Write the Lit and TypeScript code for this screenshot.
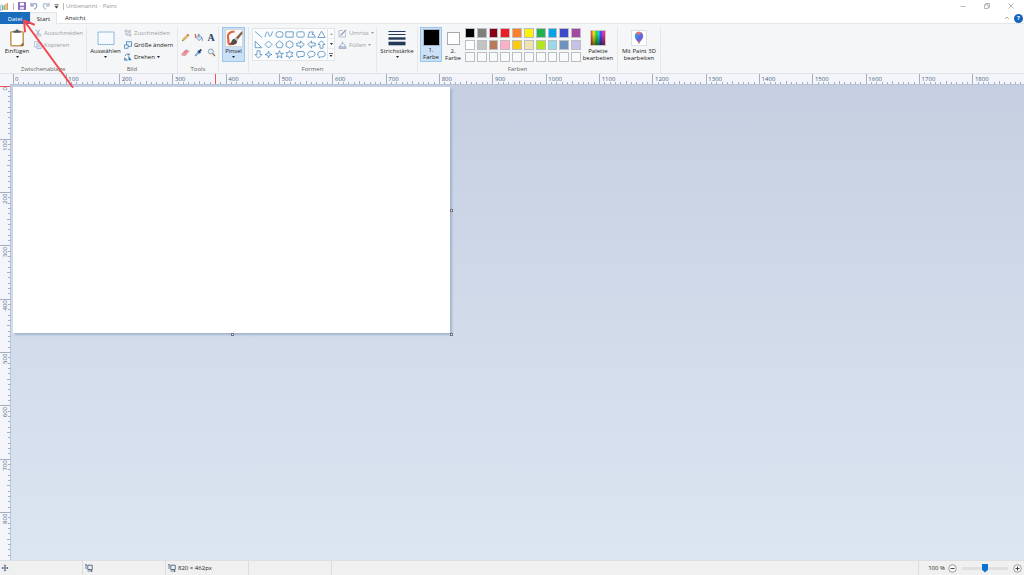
import { LitElement, html, svg, css, nothing, TemplateResult } from 'lit';
import { customElement, property } from 'lit/decorators.js';
import { classMap } from 'lit/directives/class-map.js';

const UNITS_PER_MARK = 10;
const PX_PER_UNIT = 0.5333;

@customElement('paint-ruler')
class PaintRuler extends LitElement {
  @property() axis: 'x' | 'y' = 'x';
  @property({ type: Number }) origin = 0;
  @property({ type: Number }) length = 1900;
  @property({ type: Number }) cursor = 0;

  static styles = css`
    :host { display: block; overflow: hidden; background: #f3f5fa; }
    svg { display: block; width: 100%; height: 100%; }
    line { stroke: #a3b0c4; stroke-width: 1; shape-rendering: crispEdges; }
    rect { fill: #f4505a; }
    text { font: 6px "Open Sans", "Noto Sans", sans-serif; fill: #4c5f7d; }
  `;

  render() {
    const marks: TemplateResult[] = [];
    for (let i = 0; i * UNITS_PER_MARK < this.length; i++) {
      const p = this.origin + i * UNITS_PER_MARK * PX_PER_UNIT;
      const major = i % 10 === 0;
      const size = major ? 10 : i % 5 === 0 ? 3 : 2;
      const value = i * UNITS_PER_MARK;
      marks.push(
        this.axis === 'x'
          ? svg`<line x1=${p} x2=${p} y1=${10 - size} y2="10"></line>${major ? svg`<text x=${p + 2} y="7">${value}</text>` : nothing}`
          : svg`<line y1=${p} y2=${p} x1=${10 - size} x2="10"></line>${major ? svg`<text text-anchor="end" transform="translate(7 ${p + 1}) rotate(-90)">${value}</text>` : nothing}`,
      );
    }
    const c = this.cursor;
    return html`<svg aria-hidden="true">${marks}${this.axis === 'x'
      ? svg`<rect x=${c} y="0" width="1" height="10"></rect>`
      : svg`<rect x="0" y=${c} width="10" height="1"></rect>`}</svg>`;
  }
}

const icon = (w: number, h: number, body: TemplateResult) =>
  html`<svg class="icon" width=${w} height=${h} viewBox="0 0 ${w} ${h}" fill="none" aria-hidden="true">${body}</svg>`;

const arrow = html`<svg class="arrow" width="3" height="2" viewBox="0 0 3 2" aria-hidden="true"><path d="M0 0H3L1.5 2Z" fill="currentColor"/></svg>`;

const icons = {
  app: icon(9, 9, svg`<path d="M.5 3.5 2 2.500v6H.5z" fill="#fff" stroke="#8da0ae" stroke-width=".6"/><rect x="2" y="3.500" width="1.500" height="4.500" fill="#6cb6d8"/><rect x="3.700" y="3" width="1.300" height="5" fill="#8fc46c"/><rect x="5.200" y="2" width="1.300" height="6" fill="#f2b24a"/><rect x="6.700" y="1" width="1.200" height="7" fill="#d98b6a"/>`),
  save: icon(8, 8, svg`<path d="M.5.5H7.500V7.500H.5Z" fill="#9270c2" stroke="#7a55ae" stroke-width=".8"/><rect x="2" y=".8" width="4" height="2.800" fill="#fff"/><rect x="2" y="5" width="4" height="2.500" fill="#e7dff3"/>`),
  undo: icon(8, 8, svg`<path d="M1 .8V3.800H4M1.200 3.600C3 .8 7 1.200 6.800 4.200 6.700 5.700 5.500 6.500 4 7.500" stroke="#9aa9c8" stroke-width="1.300"/>`),
  redo: icon(8, 8, svg`<path d="M7 .8V3.800H4M6.800 3.600C5 .8 1 1.200 1.200 4.200 1.300 5.700 2.500 6.500 4 7.500" stroke="#b3bfd2" stroke-width="1.300"/>`),
  custom: icon(5, 5, svg`<path d="M.5 .8H4.500" stroke="#333" stroke-width=".8"/><path d="M.5 2.300H4.500L2.500 4.500Z" fill="#333"/>`),
  min: icon(8, 8, svg`<path d="M1.500 4.500H6.500" stroke="#999" stroke-width=".7"/>`),
  restore: icon(8, 8, svg`<path d="M1.500 2.800H5.200V6.500H1.500ZM2.700 2.800V1.500H6.500V5.300H5.200" stroke="#888" stroke-width=".6"/>`),
  close: icon(8, 8, svg`<path d="M1.500 1.500 6.500 6.500M6.500 1.500 1.500 6.500" stroke="#888" stroke-width=".6"/>`),
  fold: icon(6, 6, svg`<path d="M1 4 3 2 5 4" stroke="#888" stroke-width=".7"/>`),
  paste: icon(16, 18, svg`<rect x="1.800" y="2.800" width="12.400" height="14" rx="1" fill="#fff" stroke="#c39a5c" stroke-width="1.600"/><path d="M10.500 17 14.500 13V17Z" fill="#9a7338"/><path d="M4.500 3.500V1.800H6.500C6.500 0 9.500 0 9.500 1.800H11.500V3.800H4.500Z" fill="#5a5c60"/>`),
  cut: icon(8, 8, svg`<path d="M2 .5 5 5M6 .5 3 5" stroke="#9ba9bd" stroke-width=".9"/><circle cx="2.300" cy="6.200" r="1.200" stroke="#9bb1d6" stroke-width=".8"/><circle cx="5.700" cy="6.200" r="1.200" stroke="#9bb1d6" stroke-width=".8"/>`),
  copy: icon(8, 8, svg`<path d="M.5.5H4.500V6H.5Z" fill="#f3f6fb" stroke="#adbdd6" stroke-width=".8"/><path d="M3 2H7.300V7.500H3Z" fill="#e5ecf7" stroke="#9eb3d3" stroke-width=".8"/><path d="M4 4H6.300M4 5.500H6.300" stroke="#adbdd6" stroke-width=".6"/>`),
  select: icon(18, 16, svg`<rect x="1" y="2" width="16" height="12.500" fill="#f6fafe" stroke="#5a9ccb" stroke-width=".8" stroke-dasharray="1.500 .3"/>`),
  crop: icon(8, 8, svg`<path d="M2 .5V6H7.500M.5 2H6V7.500" stroke="#a4b2c8" stroke-width=".9"/><path d="M2.500 5.500 7 1" stroke="#a4b2c8" stroke-width=".8"/>`),
  resize: icon(8, 8, svg`<rect x="2.500" y=".8" width="5" height="4.500" fill="#e7f2fb" stroke="#4180b8" stroke-width=".8"/><rect x=".6" y="4" width="3.400" height="3.200" fill="#fff" stroke="#4180b8" stroke-width=".8"/>`),
  rotate: icon(8, 8, svg`<path d="M.5 7.200V4.800L3.500 7.200Z" fill="#8ab8dd" stroke="#3a78ad" stroke-width=".6"/><path d="M4.500 2.500 7.500 7.300H4.500Z" fill="#2877b8"/><path d="M1.200 3C1.500 1 3.500.5 5 1.500M5.300.3V2H3.500" stroke="#35699c" stroke-width=".7"/>`),
  pencil: icon(9, 9, svg`<path d="M1.200 8 2 5.800 6.800 1 8.200 2.300 3.300 7.200Z" fill="#e3bb57" stroke="#b8934a" stroke-width=".5"/><path d="M6 1.800 6.800 1 8.200 2.300 7.400 3.100Z" fill="#c8657a"/><path d="M1.200 8 1.600 6.900 2.300 7.600Z" fill="#444"/>`),
  fill: icon(9, 9, svg`<path d="M1.200 1C1.800 2.500 2 3 1.600 5" stroke="#dc6a42" stroke-width="1.400"/><path d="M2.200 4.500 5 1.500 8 4.800 5 7.700Z" fill="#cfdff0" stroke="#6c8bb0" stroke-width=".7"/><path d="M4.800 4.200V.8M7.200 4.500C8.500 5 8.500 6.500 8.200 7.800" stroke="#4b82bd" stroke-width=".9"/>`),
  text: html`<span class="glyph">A</span>`,
  eraser: icon(9, 9, svg`<path d="M.8 5.800 4.800 1.800 8.200 3.200 4.300 7.500 1 7.200Z" fill="#ea7f8d" stroke="#cf7681" stroke-width=".5"/><path d="M1 5.800 4.300 6.200 8 3.200" stroke="#fbd5d9" stroke-width=".6"/>`),
  picker: icon(9, 9, svg`<path d="M1 8 1.500 6.500 4.500 3.500 5.500 4.500 2.500 7.500Z" fill="#8fc1e6" stroke="#5c88b0" stroke-width=".6"/><path d="M4 2.800 6.300 5M5 3.800 7.300 1.500" stroke="#24476f" stroke-width="1.800"/>`),
  zoom: icon(9, 9, svg`<circle cx="3.800" cy="3.500" r="2.500" fill="#e4f0f8" stroke="#7e8c9c" stroke-width=".8"/><path d="M5.700 5.500 8 8" stroke="#9b7750" stroke-width="1.300"/>`),
  brush: icon(18, 18, svg`<rect x=".5" y=".5" width="17" height="17" fill="#fbfbfb" stroke="#d3cfc9" stroke-width=".8"/><path d="M9.500 2.500C4.500 2.500 2 5.500 3 9 4 12.500 2.500 14 4.500 15.200 6.500 16 6.500 13 9 14" stroke="#e0643a" stroke-width="2.200"/><path d="M17 2 10.500 9 12.500 11 17.500 4.500Z" fill="#8a6243"/><path d="M11 8.300 9 10 12 12.800 13.500 10.500Z" fill="#b4c2d0"/><path d="M9.200 9.800C6 10.500 7.500 13.500 4.500 15 8.500 17 12 15.500 12.200 12.600Z" fill="#5a4a45"/>`),
  outline: icon(9, 9, svg`<path d="M7.500 3.500V8H1V1.500H5" stroke="#a9b7cb" stroke-width=".8"/><path d="M2.500 6.500 8 1" stroke="#8fa2bd" stroke-width="1.200"/>`),
  bucket: icon(9, 9, svg`<path d="M1 7.500V5.500H8V7.500Z" fill="#b9c7db" stroke="#93a6c3" stroke-width=".7"/><path d="M2 4.500 4.800 1.500 7.300 4 5 6.500Z" fill="#eef3fa" stroke="#93a6c3" stroke-width=".7"/><path d="M4.500 3.500V.5" stroke="#93a6c3" stroke-width=".7"/>`),
  strokes: icon(18, 18, svg`<path d="M.5 2.500H17.500" stroke="#24385a"/><path d="M.5 5.500H17.500" stroke="#24385a"/><path d="M.5 9.500H17.500" stroke="#24385a" stroke-width="2.400"/><path d="M.5 14.500H17.500" stroke="#24385a" stroke-width="3.600"/>`),
  palette: html`<span class="rainbow"></span>`,
  paint3d: icon(18, 18, svg`<defs><linearGradient id="p3" x1="0" y1="0" x2="1" y2="1"><stop offset="0" stop-color="#28b8ec"/><stop offset=".5" stop-color="#5a68dc"/><stop offset="1" stop-color="#b04ac8"/></linearGradient></defs><rect x="1.500" y="1.500" width="15" height="15" fill="#fff" stroke="#d6dae0" stroke-width=".8"/><path d="M9 15C8 12 4.800 10.500 4.800 7A4.200 4.200 0 0 1 13.200 7C13.200 10.500 10 12 9 15Z" fill="url(#p3)"/><path d="M6 4C7.500 2.500 10 2.300 11.800 4L8.500 6Z" fill="#f26d6d"/><path d="M8 12.500H10L9 15Z" fill="#f08a3c"/>`),
  move: icon(8, 8, svg`<path d="M4 1V7M1 4H7" stroke="#35506f" stroke-width=".8"/><path d="M4 .5 5 1.800H3ZM4 7.500 5 6.200H3ZM.5 4 1.800 3V5ZM7.500 4 6.200 3V5Z" fill="#35506f"/>`),
  size: icon(8, 8, svg`<path d="M2.800 1.200H7.200V5.500H2.800Z" stroke="#35506f" stroke-width=".8"/><path d="M1 .5V5M0 1.500 1 .3 2 1.500M2.500 7H7M6 6.200 7.300 7 6 7.800" stroke="#35506f" stroke-width=".7"/>`),
};

const shapes: [string, string][] = [
  ['Linie', 'M1 1.500 8 7.500'],
  ['Kurve', 'M1 7C2.500 0 4 1 4.800 4.500S7 7 8.500 1.500'],
  ['Ellipse', 'M.8 4.500A3.700 3 0 0 1 8.200 4.500 3.700 3 0 0 1 .8 4.500Z'],
  ['Rechteck', 'M.8 1.800H8.200V7.200H.8Z'],
  ['Abgerundetes Rechteck', 'M2.300 1.800H6.700Q8.200 1.800 8.200 3.300V5.700Q8.200 7.200 6.700 7.200H2.300Q.8 7.200.8 5.700V3.300Q.8 1.800 2.300 1.800Z'],
  ['Polygon', 'M.8 7.200 2.500 2H6.500L5 4.500H7L8.300 7.200Z'],
  ['Dreieck', 'M4.500 1.200 8.200 7.500H.8Z'],
  ['Rechtwinkliges Dreieck', 'M1.200 1.200 7.800 7.700H1.200Z'],
  ['Raute', 'M4.500 1 8 4.500 4.500 8 1 4.500Z'],
  ['Fünfeck', 'M4.500 1 8.200 4 6.800 7.700H2.200L.8 4Z'],
  ['Sechseck', 'M4.500.8 7.900 2.700V6.300L4.500 8.200 1.100 6.300V2.700Z'],
  ['Pfeil nach rechts', 'M.8 3H4.500V1L8.300 4.500 4.500 8V6H.8Z'],
  ['Pfeil nach links', 'M8.200 3H4.500V1L.7 4.500 4.500 8V6H8.200Z'],
  ['Pfeil nach oben', 'M3 8.200V4.500H1L4.500.8 8 4.500H6V8.200Z'],
  ['Pfeil nach unten', 'M3 .8V4.500H1L4.500 8.200 8 4.500H6V.8Z'],
  ['Stern mit vier Spitzen', 'M4.500 1 5.300 3.700 8 4.500 5.300 5.300 4.500 8 3.700 5.300 1 4.500 3.700 3.700Z'],
  ['Stern mit fünf Spitzen', 'M4.500.6 5.500 3.400H8.400L6.100 5.200 7 8 4.500 6.300 2 8 2.900 5.200.6 3.400H3.500Z'],
  ['Stern mit sechs Spitzen', 'M4.500.6 5.500 2.600H7.900L6.700 4.500 7.900 6.400H5.500L4.500 8.400 3.500 6.400H1.100L2.300 4.500 1.100 2.600H3.500Z'],
  ['Abgerundete Legende', 'M2 1.500H7Q8.300 1.500 8.300 3V5Q8.300 6.500 7 6.500H4L2.500 8V6.500H2Q.7 6.500.7 5V3Q.7 1.500 2 1.500Z'],
  ['Ovale Legende', 'M2 8 2.300 6.200C-1 4.500 1 1.300 4.500 1.300 9.300 1.300 9.300 6.700 4.500 6.700Z'],
  ['Wolkenlegende', 'M2 2Q3.200.8 4.500 1.600 6.200.7 7.200 2.200 8.800 3.200 8 4.800 8 6.700 6 6.600 4.500 7.600 3.200 6.800L2 8V6.300Q0 5.500.9 4 .6 2.500 2 2Z'],
];

const colors = [
  '#000000', '#7f7f7f', '#880015', '#ed1c24', '#ff7f27', '#fff200', '#22b14c', '#00a2e8', '#3f48cc', '#a349a4',
  '#ffffff', '#c3c3c3', '#b97a57', '#ffaec9', '#ffc90e', '#efe4b0', '#b5e61d', '#99d9ea', '#7092be', '#c8bfe7',
  ...Array(10).fill(''),
];

@customElement('app-root')
class AppRoot extends LitElement {
  static styles = css`
    * { box-sizing: border-box; }
    :host {
      display: grid; grid-template-rows: 12px 12px 50px 10px minmax(0, 1fr) 15px;
      position: relative; height: 100vh; overflow: hidden; background: #fff; color: #222;
      font: 6px/7px "Open Sans", "Noto Sans", sans-serif; cursor: default;
    }
    button { margin: 0; padding: 0; border: 0; background: none; font: inherit; color: inherit; }
    .icon, .arrow { display: block; flex: none; }
    .titlebar, .tabs, .status, .quick, .window { display: flex; align-items: center; }
    .quick { gap: 4px; }
    .divider { width: 1px; height: 7px; background: #bbb; }
    .title { margin: 0 0 0 2px; font: inherit; color: #999; }
    .window { margin-left: auto; gap: 16px; padding-right: 9px; }
    .tabs { align-items: stretch; border-bottom: 1px solid #e4e6e9; }
    .tab { padding: 2px 8px 0; }
    .tab.file { width: 30px; background: #1a6dbd; color: #fff; padding: 2px 0 0; margin-bottom: -1px; }
    .tab.active { width: 27px; padding: 1px 0 0; background: #f5f6f7; border: 1px solid #e4e6e9; border-bottom: 0; margin-bottom: -1px; }
    .help { margin-left: auto; display: flex; align-items: center; gap: 4px; padding: 1px 1px 0 0; }
    .help .round { width: 9px; height: 9px; border-radius: 50%; background: #1464bd; color: #fff; font-weight: 700; }
    .ribbon { display: flex; background: #f5f6f7; border-bottom: 1px solid #dfe3e8; padding: 3px 0 0; }
    .group { display: grid; grid-template-rows: 35px 1fr; border-right: 1px solid #e5e7ea; justify-items: center; white-space: nowrap; flex: none; }
    .group h2 { align-self: end; margin: 0; font: inherit; color: #666; }
    .body { display: flex; width: 100%; }
    .clip { width: 87px; } .image { width: 91px; } .tools { width: 41px; }
    .single { width: 30px; } .forms { width: 128px; } .stroke { width: 41px; }
    .farben { width: 200px; } .three { width: 43px; }
    .big { display: flex; flex-direction: column; align-items: center; height: 35px; padding-top: 1px; }
    .big .pic { display: grid; place-items: center; height: 20px; }
    .big .arrow { margin-top: 1px; }
    .big.on { background: #c9e0f7; border: 1px solid #9cc5ec; padding-top: 0; }
    .w34 { width: 34px; } .w37 { width: 37px; } .w23 { width: 23px; } .w22 { width: 22px; }
    .center { justify-content: center; }
    .start { padding-left: 2px; }
    .list { display: flex; flex-direction: column; gap: 4px; padding-top: 2px; }
    .row { display: flex; align-items: center; gap: 2px; height: 8px; }
    .row.off { color: #9a9ea5; }
    .toolgrid { display: grid; grid-template-columns: repeat(3, 13px); grid-template-rows: 15px 15px; width: 100%; justify-content: center; padding-top: 3px; }
    .toolgrid button { display: grid; place-items: center; }
    .glyph { font: bold 10px/9px "Liberation Serif", serif; color: #243f66; }
    .gallery { display: flex; width: 83px; height: 33px; margin: 1px 3px 0 3px; border: 1px solid #e1e5ea; background: #fbfcfd; }
    .shapes { display: grid; grid-template-columns: repeat(7, 1fr); flex: 1; }
    .shapes button { display: grid; place-items: center; }
    .shapes .icon { stroke: #4f8abb; stroke-width: .8; }
    .scroll { display: grid; width: 7px; border-left: 1px solid #e1e5ea; }
    .scroll button { display: grid; place-items: center; }
    .scroll button + button { border-top: 1px solid #e8ebef; }
    .chip { border: 1px solid #a8abae; background: #fff; width: 13px; height: 13px; }
    .chip.black { width: 17px; height: 17px; background: #000; border-color: #a3b4c4; }
    .swatches { display: grid; grid-template-columns: repeat(10, 1fr); grid-template-rows: repeat(3, 10px); gap: 2px; width: 116px; margin: 1px 0 0 1px; }
    .swatch { border: 1px solid #bcbfc2; background: #f8f9fa; }
    .rainbow { width: 16px; height: 16px; border: 1px solid #c9c9c9; background: linear-gradient(#0000 20%, #0008), linear-gradient(90deg, #e33, #ee2 20%, #3c3 38%, #2cd 55%, #34e 70%, #d3d 85%, #e33); }
    .work { display: grid; grid-template-columns: 10px minmax(0, 1fr); min-height: 0; }
    .stage { background: linear-gradient(#c5cfe1, #dce6f2); border-left: 1px solid #b6c3d9; border-top: 1px solid #b6c3d9; padding: 2px; }
    .canvas { position: relative; width: 437px; height: 246px; background: #fff; box-shadow: 2px 2px 2px #a3b3cc; }
    .handle { position: absolute; width: 3px; height: 3px; background: #fff; border: 1px solid #6b7280; }
    .handle.e { right: -3px; top: calc(50% - 1px); } .handle.s { bottom: -3px; left: calc(50% - 1px); } .handle.se { right: -3px; bottom: -3px; }
    .status { background: #f0f0f0; border-top: 1px solid #dcdfe3; }
    .cell { display: flex; align-items: center; gap: 2px; height: 100%; padding-left: 2px; width: 83px; border-right: 1px solid #dcdcdc; }
    .cell.first { padding-left: 1px; }
    .zoom { display: flex; align-items: center; gap: 3px; height: 100%; margin-left: auto; padding: 0 2px 0 9px; border-left: 1px solid #dcdcdc; }
    .zoom label { white-space: nowrap; }
    input { appearance: none; width: 46px; height: 10px; margin: 0 2px; background: none; }
    input::-webkit-slider-runnable-track { height: 3px; background: #e0e0e0; }
    input::-webkit-slider-thumb { appearance: none; width: 6px; height: 9px; margin-top: -3px; background: #0b74d1; clip-path: polygon(0 0, 100% 0, 100% 70%, 50% 100%, 0 70%); }
    .pointer { position: absolute; left: 20px; top: 17px; pointer-events: none; }
  `;

  big(label: TemplateResult | string, pic: TemplateResult, width: string, drop = false, on = false) {
    return html`<button class=${classMap({ big: true, [width]: true, on })}>
      <span class="pic">${pic}</span><span>${label}</span>${drop ? arrow : nothing}</button>`;
  }

  row(label: string, pic: TemplateResult, off = false, drop = false) {
    return html`<button class=${classMap({ row: true, off })} ?disabled=${off}>${pic}<span>${label}</span>${drop ? arrow : nothing}</button>`;
  }

  render() {
    const round = (d: string) => icon(9, 9, svg`<circle cx="4.500" cy="4.500" r="3.800" fill="#fafafa" stroke="#777" stroke-width=".7"/><path d=${d} stroke="#444"/>`);
    return html`
      <header class="titlebar">
        <div class="quick">
          ${icons.app}<span class="divider"></span>
          <button aria-label="Speichern">${icons.save}</button>
          <button aria-label="Rückgängig">${icons.undo}</button>
          <button aria-label="Wiederholen">${icons.redo}</button>
          <button aria-label="Symbolleiste anpassen">${icons.custom}</button>
          <span class="divider"></span>
        </div>
        <h1 class="title">Unbenannt - Paint</h1>
        <div class="window">
          <button aria-label="Minimieren">${icons.min}</button>
          <button aria-label="Verkleinern">${icons.restore}</button>
          <button aria-label="Schließen">${icons.close}</button>
        </div>
      </header>
      <nav class="tabs">
        <button class="tab file">Datei</button>
        <button class="tab active">Start</button>
        <button class="tab">Ansicht</button>
        <div class="help">
          <button aria-label="Menüband minimieren">${icons.fold}</button>
          <button class="round">?</button>
        </div>
      </nav>
      <section class="ribbon">
        <div class="group clip">
          <div class="body">
            ${this.big('Einfügen', icons.paste, 'w34', true)}
            <div class="list">${this.row('Ausschneiden', icons.cut, true)}${this.row('Kopieren', icons.copy, true)}</div>
          </div>
          <h2>Zwischenablage</h2>
        </div>
        <div class="group image">
          <div class="body">
            ${this.big('Auswählen', icons.select, 'w37', true)}
            <div class="list">${this.row('Zuschneiden', icons.crop, true)}${this.row('Größe ändern', icons.resize)}${this.row('Drehen', icons.rotate, false, true)}</div>
          </div>
          <h2>Bild</h2>
        </div>
        <div class="group tools">
          <div class="toolgrid">
            <button aria-label="Stift">${icons.pencil}</button>
            <button aria-label="Füllung">${icons.fill}</button>
            <button aria-label="Text">${icons.text}</button>
            <button aria-label="Radierer">${icons.eraser}</button>
            <button aria-label="Farbauswahl">${icons.picker}</button>
            <button aria-label="Bildschirmlupe">${icons.zoom}</button>
          </div>
          <h2>Tools</h2>
        </div>
        <div class="group single"><div class="body center">${this.big('Pinsel', icons.brush, 'w23', true, true)}</div></div>
        <div class="group forms">
          <div class="body">
            <div class="gallery">
              <div class="shapes">${shapes.map(([name, d]) => html`<button aria-label=${name}>${icon(9, 9, svg`<path d=${d}/>`)}</button>`)}</div>
              <div class="scroll">
                <button aria-label="Nach oben">${icon(3, 2, svg`<path d="M0 2H3L1.500 0Z" fill="#aaa"/>`)}</button>
                <button aria-label="Nach unten">${arrow}</button>
                <button aria-label="Weitere">${icon(4, 4, svg`<path d="M0 .5H4" stroke="#333" stroke-width=".7"/><path d="M.5 2H3.500L2 4Z" fill="#333"/>`)}</button>
              </div>
            </div>
            <div class="list">${this.row('Umriss', icons.outline, true, true)}${this.row('Füllen', icons.bucket, true, true)}</div>
          </div>
          <h2>Formen</h2>
        </div>
        <div class="group stroke"><div class="body center">${this.big('Strichstärke', icons.strokes, 'w37', true)}</div></div>
        <div class="group farben">
          <div class="body start">
            ${this.big(html`1.<br />Farbe`, html`<span class="chip black"></span>`, 'w22', false, true)}
            ${this.big(html`2.<br />Farbe`, html`<span class="chip"></span>`, 'w22')}
            <div class="swatches">${colors.map((c) => html`<button class="swatch" aria-label=${c || 'Leer'} style=${c ? `background:${c}` : nothing}></button>`)}</div>
            ${this.big(html`Palette<br />bearbeiten`, icons.palette, 'w34')}
          </div>
          <h2>Farben</h2>
        </div>
        <div class="group three"><div class="body center">${this.big(html`Mit Paint 3D<br />bearbeiten`, icons.paint3d, 'w37')}</div></div>
      </section>
      <paint-ruler axis="x" .origin=${13} .length=${1900} .cursor=${215}></paint-ruler>
      <main class="work">
        <paint-ruler axis="y" .origin=${2} .length=${890} .cursor=${2}></paint-ruler>
        <div class="stage">
          <div class="canvas"><i class="handle e"></i><i class="handle s"></i><i class="handle se"></i></div>
        </div>
      </main>
      <footer class="status">
        <span class="cell first">${icons.move}</span>
        <span class="cell">${icons.size}</span>
        <span class="cell">${icons.size}820 × 462px</span>
        <span class="cell"></span>
        <div class="zoom">
          <label for="zoom">100 %</label>
          <button aria-label="Verkleinern">${round('M2.500 4.500H6.500')}</button>
          <input id="zoom" type="range" min="0" max="100" value="50" />
          <button aria-label="Vergrößern">${round('M2.500 4.500H6.500M4.500 2.500V6.500')}</button>
        </div>
      </footer>
      <svg class="pointer" width="56" height="72" viewBox="0 0 56 72" fill="none" aria-hidden="true">
        <path d="M52.500 70 4 3.500M5 14.500 4 3.500 14 7.500" stroke="#f4474d" stroke-width="2" stroke-linecap="round" stroke-linejoin="round"/>
      </svg>
    `;
  }
}
